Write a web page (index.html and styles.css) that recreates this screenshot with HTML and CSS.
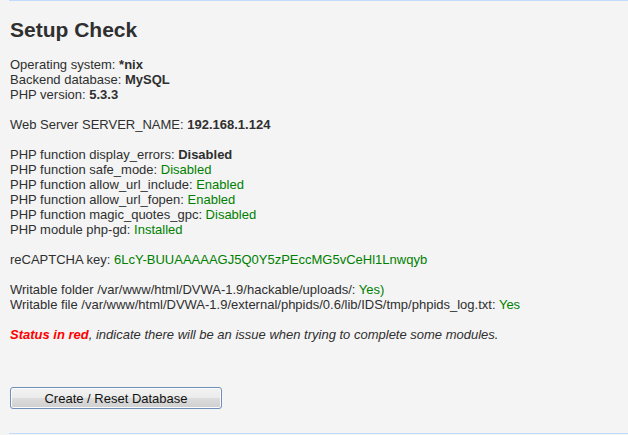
FILE: index.html
```html
<!DOCTYPE html>
<html lang="en">
<head>
    <meta charset="UTF-8">
    <title>Setup Check</title>
    <link rel="stylesheet" href="styles.css">
</head>
<body>

    <div class="body_padded">
        <h1>Setup Check</h1>

        <p>
            Operating system: <em class="val">*nix</em><br>
            Backend database: <em class="val">MySQL</em><br>
            PHP version: <em class="val">5.3.3</em><br>
            <br>
            Web Server SERVER_NAME: <em class="val">192.168.1.124</em><br>
            <br>
            PHP function display_errors: <em class="val">Disabled</em><br>
            PHP function safe_mode: <span class="success">Disabled</span><br>
            PHP function allow_url_include: <span class="success">Enabled</span><br>
            PHP function allow_url_fopen: <span class="success">Enabled</span><br>
            PHP function magic_quotes_gpc: <span class="success">Disabled</span><br>
            PHP module php-gd: <span class="success">Installed</span><br>
            <br>
            reCAPTCHA key: <span class="success">6LcY-BUUAAAAAGJ5Q0Y5zPEccMG5vCeHl1Lnwqyb</span><br>
            <br>
            Writable folder /var/www/html/DVWA-1.9/hackable/uploads/: <span class="success">Yes)</span><br>
            Writable file /var/www/html/DVWA-1.9/external/phpids/0.6/lib/IDS/tmp/phpids_log.txt: <span class="success">Yes</span><br>
            <br>
            <i><span class="failure">Status in red</span>, indicate there will be an issue when trying to complete some modules.</i>
        </p>

        <form class="setup" action="#" method="post">
            <input name="create_db" type="submit" value="Create / Reset Database">
        </form>
    </div>

</body>
</html>
```

FILE: styles.css
```css
body {
    margin: 0;
    background-color: #f4f4f4;
    color: #2f2f2f;
    font-family: "Liberation Sans", Arial, sans-serif;
    font-size: 13px;
    line-height: 15px;
}
.body_padded {
    margin-left: 9px;
    padding: 16px 0 0 1px;
    height: 416px;
    border-top: 1px solid #c2dafc;
    border-bottom: 1px solid #c2dafc;
}
h1 {
    margin: 0 0 14px 0;
    font-size: 21px;
    line-height: 26px;
    font-weight: bold;
    color: #2f2f2f;
}
p {
    margin: 0;
}
.val {
    font-style: normal;
    font-weight: bold;
}
.success {
    color: #008000;
}
.failure {
    color: #ff0000;
    font-weight: bold;
}
.setup {
    margin-top: 45px;
}
.setup input {
    width: 212px;
    height: 22px;
    padding: 0;
    font-family: "Liberation Sans", Arial, sans-serif;
    font-size: 13px;
    color: #111;
    border: 1px solid #6f8fb8;
    border-radius: 3px;
    background: linear-gradient(#f2f2f2 0%, #ebebeb 50%, #dddddd 51%, #cfcfcf 100%);
    box-shadow: inset 0 0 0 1px #fbfbfb;
}
```
